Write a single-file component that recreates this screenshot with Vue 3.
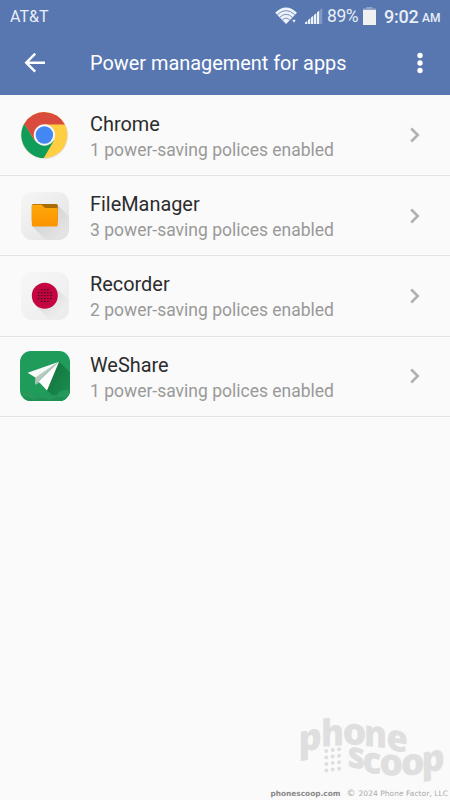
<script setup>
const apps = [
  { id: 'chrome', name: 'Chrome', count: 1 },
  { id: 'files', name: 'FileManager', count: 3 },
  { id: 'recorder', name: 'Recorder', count: 2 },
  { id: 'share', name: 'WeShare', count: 1 },
]
const grille = []
for (let r = 0; r < 5; r++) {
  for (let c = 0; c < 5; c++) {
    if ((r === 0 || r === 4) && (c === 0 || c === 4)) continue
    grille.push({ x: 18.6 + c * 3.1, y: 18.8 + r * 2.9 })
  }
}
// x, baseline y, vertical skew and width factor for every letter of the arched wordmark
const letters = [
  { c: 'p', x: 298.4, y: 752.8, k: -11, w: 0.98 },
  { c: 'h', x: 321, y: 746.7, k: -4, w: 0.93 },
  { c: 'o', x: 342.4, y: 744.2, k: 2, w: 1.02 },
  { c: 'n', x: 364, y: 745.8, k: 6, w: 0.93 },
  { c: 'e', x: 386.6, y: 749.4, k: 9, w: 0.94 },
  { c: 's', x: 347.4, y: 766.4, k: 11, w: 0.92 },
  { c: 'c', x: 362.4, y: 772, k: 8, w: 0.95 },
  { c: 'o', x: 379.2, y: 775, k: 2, w: 1.02 },
  { c: 'o', x: 400.8, y: 776, k: -5, w: 1.02 },
  { c: 'p', x: 421.6, y: 773.4, k: -10, w: 0.98 },
]
</script>

<template>
  <main class="screen">
    <header class="top">
      <div class="status">
        <span class="carrier">AT&amp;T</span>
        <svg class="wifi" width="24" height="18" viewBox="0 0 24 18">
          <path d="M.2 5.8Q11-4.6 22 5.8L11.1 17Z" fill="#eef2f9" />
          <path d="M2.4 7.6Q11.1-.4 19.8 7.6M4.9 10.2Q11.1 4.4 17.3 10.2M7.4 12.9Q11.1 9.4 14.8 12.9" fill="none" stroke="#5877b0" stroke-width=".8" />
          <path d="M16.5 12.3h5l-2.5 4.4z" fill="#eef2f9" stroke="#5877b0" stroke-width="1" />
        </svg>
        <svg class="signal" width="18" height="18" viewBox="0 0 18 18">
          <path d="M0 17v-1.5l2.3-1.5v3zM3 17v-4l2.3-1.7V17zM6 17v-6.5l2.3-1.7V17zM9 17V8l2.3-1.8V17zM12 17V5.3l2.3-1.8V17z" fill="#eef2f9" />
          <path d="M15 17V2.7L17.3 1v16z" fill="#8098c5" />
        </svg>
        <span class="percent">89%</span>
        <svg class="battery" width="13" height="18" viewBox="0 0 13 18">
          <path d="M3.5 0h6v1.6H13V4H0V1.6h3.5z" fill="#91a4c9" />
          <path d="M0 3h13v15H0z" fill="#f1f1f1" />
        </svg>
        <span class="time">9:02</span><span class="ampm">AM</span>
      </div>
      <div class="toolbar">
        <svg class="back" width="22" height="22" viewBox="0 0 22 22">
          <path d="M11.2 1.7 2.2 10.7l9 9M2.4 10.7H21" fill="none" stroke="#fff" stroke-width="2.4" />
        </svg>
        <h1>Power management for apps</h1>
        <svg class="more" width="6" height="22" viewBox="0 0 6 22" fill="#fff">
          <circle cx="3" cy="3.5" r="2.7" /><circle cx="3" cy="11" r="2.7" /><circle cx="3" cy="18.5" r="2.7" />
        </svg>
      </div>
    </header>

    <section class="list">
      <article v-for="app in apps" :key="app.id" class="row">
        <svg v-if="app.id === 'chrome'" class="icon" viewBox="0 0 50 50">
          <circle cx="24.4" cy="25.6" r="23.6" fill="#e2e2e2" />
          <circle cx="24.4" cy="25" r="23" fill="#ffce43" />
          <path d="M24.4 25 14.6 30.5 4.3 13.5A23.2 23.2 0 0 0 23.8 48.1L34 30.5Z" fill="#109d59" />
          <path d="M4.3 13.7A23.2 23.2 0 0 1 44.9 14.5H24.4L14.8 30.5Z" fill="#d94b3d" />
          <circle cx="24.4" cy="25" r="10.7" fill="#f5f5f5" />
          <circle cx="24.4" cy="25" r="8.7" fill="#4387f5" />
        </svg>

        <svg v-else-if="app.id === 'files'" class="icon" viewBox="0 0 50 50">
          <defs>
            <linearGradient id="plate" x1="0" y1="0" x2="1" y2="1">
              <stop offset="0" stop-color="#f6f6f6" /><stop offset="1" stop-color="#e2e2e2" />
            </linearGradient>
            <linearGradient id="fade" x1="0" y1="0" x2="1" y2="1">
              <stop offset=".2" stop-color="#bdbdbd" /><stop offset=".8" stop-color="#e2e2e2" />
            </linearGradient>
            <linearGradient id="folder" x1="0" y1="0" x2="0" y2="1">
              <stop offset="0" stop-color="#ffa70b" /><stop offset="1" stop-color="#fb9400" />
            </linearGradient>
          </defs>
          <rect x="1" y="1" width="48" height="48" rx="11" fill="url(#plate)" />
          <path d="M12.5 35.5 37.5 14 49 25.5V38q0 11-11 11H26z" fill="url(#fade)" opacity=".6" />
          <rect x="11.8" y="13" width="26" height="18" rx="1.6" fill="#a86b06" />
          <path d="M11.8 15q0-1.2 1.5-1.2h8.2l3.6 3.3h11.2q1.5 0 1.5 1.5v15.4q0 1.6-1.6 1.6H13.4q-1.6 0-1.6-1.6z" fill="url(#folder)" />
        </svg>

        <svg v-else-if="app.id === 'recorder'" class="icon" viewBox="0 0 50 50">
          <defs>
            <linearGradient id="pale" x1="0" y1="0" x2="1" y2="1">
              <stop offset="0" stop-color="#f7f7f7" /><stop offset="1" stop-color="#ececec" />
            </linearGradient>
            <linearGradient id="shade" x1="0" y1="0" x2="1" y2="1">
              <stop offset=".25" stop-color="#ccc" /><stop offset=".75" stop-color="#ececec" />
            </linearGradient>
          </defs>
          <rect x="1" y="1" width="48" height="48" rx="11" fill="url(#pale)" />
          <path d="m15 34 20-18 14 13v9q0 11-11 11h-8z" fill="url(#shade)" opacity=".6" />
          <circle cx="24.8" cy="24.7" r="13" fill="#c4053f" />
          <rect v-for="(d, i) in grille" :key="i" :x="d.x - .9" :y="d.y - .5" width="1.8" height="1.1" fill="#4b0c22" />
        </svg>

        <svg v-else class="icon" viewBox="0 0 50 50">
          <defs>
            <clipPath id="tile"><rect width="50" height="50" rx="11" /></clipPath>
            <linearGradient id="cast" x1="0" y1="0" x2="1" y2="1">
              <stop offset=".2" stop-color="#14763f" /><stop offset="1" stop-color="#1c9152" />
            </linearGradient>
          </defs>
          <g clip-path="url(#tile)">
            <path d="M0 0h50v50H0z" fill="#1f9c5a" />
            <path d="m39 10.5 11 11V50H38L26.5 39z" fill="url(#cast)" />
            <g fill="#25985a">
              <circle cx="7" cy="48" r="8.5" /><circle cx="22" cy="54" r="11" /><circle cx="34" cy="53" r="9" /><circle cx="45" cy="48" r="9" />
            </g>
            <g fill="#1f9053">
              <ellipse cx="5" cy="51" rx="9" ry="5" /><ellipse cx="21" cy="52" rx="10" ry="5" /><ellipse cx="40" cy="52" rx="12" ry="6" />
            </g>
            <path d="M39 10.8 7.6 21.8l8.2 5z" fill="#f8faf9" />
            <path d="M39 10.8 15.4 26.6l-.4 7.2 3.8-3.5z" fill="#b7c9bf" />
            <path d="M39 10.8 18.6 29.6 15 34l5-2.5z" fill="#8fb7a0" />
            <path d="M39 10.8 18.6 30.6l8.4 9z" fill="#fff" />
          </g>
        </svg>

        <div class="copy">
          <h2>{{ app.name }}</h2>
          <p>{{ app.count }} power-saving polices enabled</p>
        </div>
        <svg class="chevron" width="10" height="16" viewBox="0 0 10 16">
          <path d="m1.2 1.5 6.6 6.5-6.6 6.5" fill="none" stroke="#b1b1b1" stroke-width="2.5" />
        </svg>
      </article>
    </section>

    <footer class="credit">
      <svg class="wordmark" width="153" height="80" viewBox="297 706 153 80" fill="#dfdfdf">
        <text v-for="(l, i) in letters" :key="i" class="letter" :transform="`translate(${l.x} ${l.y}) skewY(${l.k}) scale(${l.w} 1)`">{{ l.c }}</text>
        <g v-for="r in 4" :key="r">
          <circle v-for="c in 3" :key="c" :cx="319.9 + c * 6.4" :cy="745.4 + r * 6.5 - c * .9" r="2" />
        </g>
      </svg>
      <div class="legal"><b>phonescoop.com</b><span class="copyright">©</span><span class="owner">2024 Phone Factor, LLC</span></div>
    </footer>
  </main>
</template>

<style>
body { margin: 0; background: #fafafa; }
</style>

<style scoped>
.screen { width: 450px; height: 800px; display: flex; flex-direction: column; overflow: hidden; background: #fafafa; font-family: Roboto, sans-serif; }
.top { height: 95px; flex: none; background: #5877b0; color: #fff; }
.status { height: 32px; display: flex; align-items: center; color: #e9eef7; white-space: nowrap; }
.carrier { font-size: 16px; margin-left: 10px; flex: 1; }
.wifi { margin-right: 6px; }
.signal { margin-right: 4px; }
.percent { width: 33px; font-size: 17.5px; letter-spacing: -.4px; }
.battery { margin: 0 8px 1px 3px; }
.time { width: 35px; font-size: 18px; font-weight: 500; letter-spacing: -.2px; }
.ampm { width: 18px; margin: 3px 10px 0 3px; font-size: 12px; font-weight: 500; }
.toolbar { height: 62px; display: flex; align-items: center; padding: 0 27px 0 24px; }
h1 { flex: 1; margin: 0 0 0 44px; padding-top: 1px; font-size: 19.9px; line-height: 27px; font-weight: 400; white-space: nowrap; }
.list { flex: none; padding-top: .5px; }
.row { box-sizing: border-box; height: 80.4px; display: flex; align-items: center; padding: 0 30px 0 20px; border-bottom: 1px solid #e3e3e3; }
.icon { width: 50px; height: 50px; flex: none; }
.copy { flex: 1; margin-left: 20px; padding-top: 4px; }
h2 { margin: 0; font-size: 19.9px; line-height: 26px; font-weight: 400; color: #2c2c2c; }
p { margin: 0; font-size: 17.5px; line-height: 25px; color: #999; }
.credit { margin-top: auto; display: flex; flex-direction: column; align-items: flex-end; }
.wordmark { display: block; overflow: visible; }
.letter { font: 800 37px "Open Sans", sans-serif; }
.legal { height: 14px; padding: 2px 2px 0 0; box-sizing: border-box; display: flex; align-items: center; color: #aaa; font: 7.5px/12px "DejaVu Sans", sans-serif; text-rendering: geometricPrecision; white-space: nowrap; }
.legal b { color: #888; font-size: 7.4px; }
.copyright { margin: 0 3px 0 6px; font-size: 9px; }
.owner { letter-spacing: .05px; }
</style>
